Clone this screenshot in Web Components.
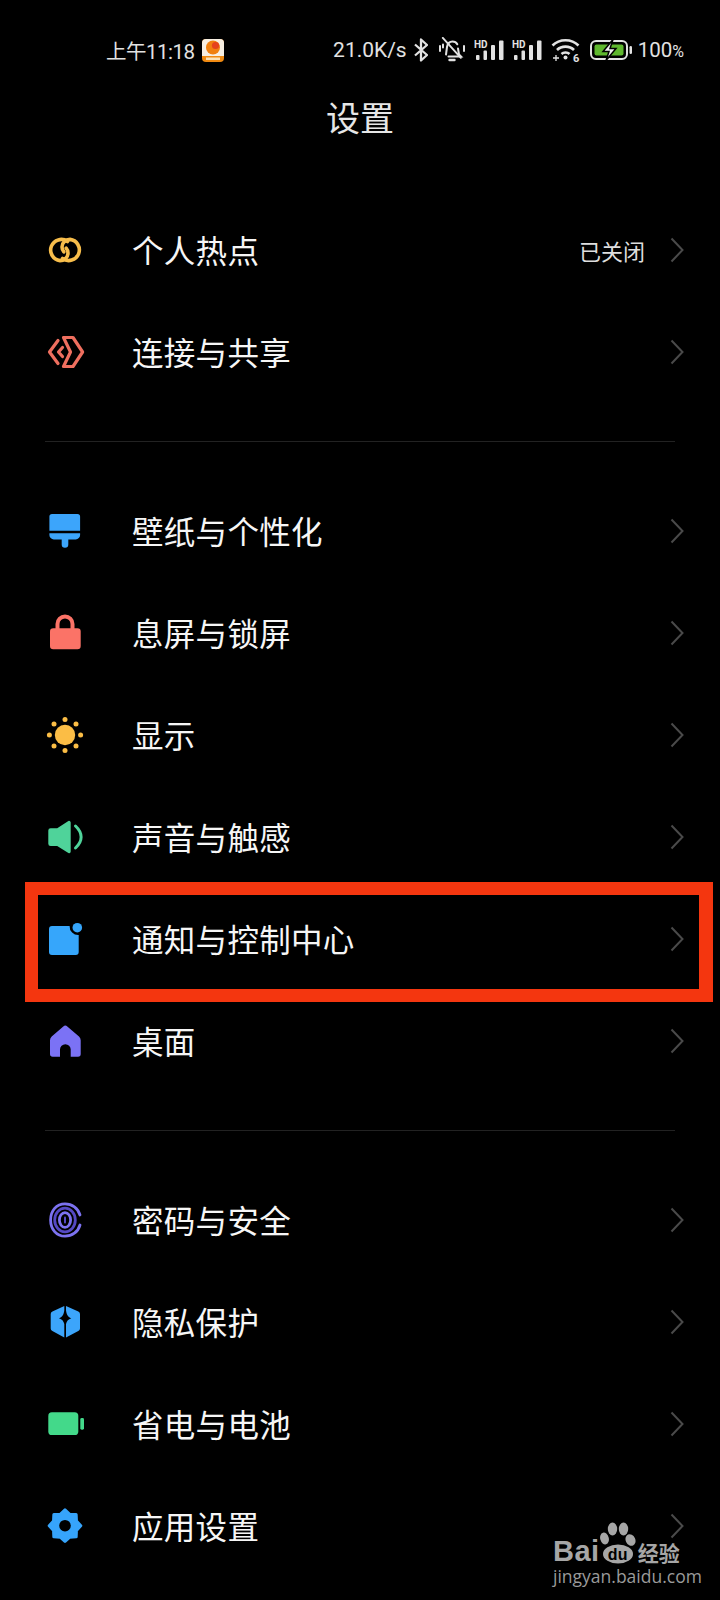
<!DOCTYPE html>
<html lang="zh-CN">
<head>
<meta charset="utf-8">
<title>设置</title>
<style>
  html, body { margin: 0; background: #000; }
  body { width: 720px; height: 1600px; overflow: hidden; position: relative; font-family: "Noto Sans CJK SC", "Noto Sans", sans-serif; }
</style>
</head>
<body>
<settings-page>
  <status-bar></status-bar>
  <title-bar>设置</title-bar>
  <setting-group>
    <setting-row><app-icon slot="icon" name="link"></app-icon>个人热点<span slot="value">已关闭</span></setting-row>
    <setting-row><app-icon slot="icon" name="share"></app-icon>连接与共享</setting-row>
  </setting-group>
  <group-divider></group-divider>
  <setting-group>
    <setting-row><app-icon slot="icon" name="brush"></app-icon>壁纸与个性化</setting-row>
    <setting-row><app-icon slot="icon" name="lock"></app-icon>息屏与锁屏</setting-row>
    <setting-row><app-icon slot="icon" name="sun"></app-icon>显示</setting-row>
    <setting-row><app-icon slot="icon" name="sound"></app-icon>声音与触感</setting-row>
    <highlight-frame><setting-row><app-icon slot="icon" name="notify"></app-icon>通知与控制中心</setting-row></highlight-frame>
    <setting-row><app-icon slot="icon" name="home"></app-icon>桌面</setting-row>
  </setting-group>
  <group-divider></group-divider>
  <setting-group>
    <setting-row><app-icon slot="icon" name="finger"></app-icon>密码与安全</setting-row>
    <setting-row><app-icon slot="icon" name="privacy"></app-icon>隐私保护</setting-row>
    <setting-row><app-icon slot="icon" name="battery"></app-icon>省电与电池</setting-row>
    <setting-row><app-icon slot="icon" name="gear"></app-icon>应用设置</setting-row>
  </setting-group>
</settings-page>
<baidu-mark></baidu-mark>

<script>
// 8 bumps around the middle, rounded off by the stroke join
function gearPoints() {
  const pts = [];
  for (let i = 0; i < 16; i++) {
    const r = i % 2 ? 12.4 : 15.8;
    const a = (i * Math.PI) / 8 - Math.PI / 2;
    pts.push((20 + r * Math.cos(a)).toFixed(2) + ',' + (19.7 + r * Math.sin(a)).toFixed(2));
  }
  return pts.join(' ');
}

const ICONS = {
  link: `<g fill="none" stroke="#f7bd4b" stroke-width="3.6" stroke-linecap="round">
      <path d="M22.5 11.5A10.6 10.6 0 1 0 15 30.6c4.6 0 8-3.4 8-7.6 0-2-.7-3.6-1.8-4.8"/>
      <path d="M17.5 28.5A10.6 10.6 0 1 0 25 9.4c-4.6 0-8 3.4-8 7.6 0 2 .7 3.6 1.8 4.8"/></g>`,
  share: `<g fill="none" stroke="#ef6f5f" stroke-width="3.2" stroke-linejoin="round" stroke-linecap="round">
      <path d="M18.5 5.5h9.5l9.6 14.5-9.6 14.5h-9.5L25.5 20z"/>
      <path d="M13 8.500 4.500 20 13 31.500"/><path d="M17.500 15.500 13.500 20l4 4.500"/></g>`,
  brush: `<g fill="#3ca5fb"><path d="M7 3h25.500a2.600 2.600 0 0 1 2.600 2.600V19.700H4.400V5.600A2.600 2.600 0 0 1 7 3z"/>
      <path d="M4.400 22.300h30.700v1.700a4.400 4.400 0 0 1-4.400 4.400h-7.400v5a3.300 3.300 0 0 1-6.600 0v-5H8.800A4.400 4.400 0 0 1 4.400 24z"/></g>`,
  lock: `<path d="M12.500 17v-6a7.500 7.500 0 0 1 15 0v6" fill="none" stroke="#fb7367" stroke-width="4"/>
      <rect x="5" y="15.300" width="30.700" height="21" rx="3.200" fill="#fb7367"/>`,
  sun: `<g fill="#fbbd45"><circle cx="20" cy="20" r="10.200"/>
      <circle cx="20" cy="4.400" r="2.500"/><circle cx="20" cy="35.600" r="2.500"/><circle cx="4.400" cy="20" r="2.500"/><circle cx="35.600" cy="20" r="2.500"/>
      <circle cx="9" cy="9" r="2.500"/><circle cx="31" cy="9" r="2.500"/><circle cx="9" cy="31" r="2.500"/><circle cx="31" cy="31" r="2.500"/></g>`,
  sound: `<path d="M5.600 11.300h6.600L23 4.200a1.700 1.700 0 0 1 2.700 1.400v28.800a1.700 1.700 0 0 1-2.700 1.400L12.200 29H5.600a2.300 2.300 0 0 1-2.300-2.300V13.600a2.300 2.300 0 0 1 2.300-2.300z" fill="#4fd39a"/>
      <path d="M30.500 9c7.500 7 7.500 15 0 22" fill="none" stroke="#4fd39a" stroke-width="3" stroke-linecap="round"/>`,
  notify: `<path d="M7 7h17.600a8.600 8.600 0 0 0 9.100 9.100V33a3 3 0 0 1-3 3H7a3 3 0 0 1-3-3V10a3 3 0 0 1 3-3z" fill="#36a6fb"/>
      <circle cx="32.300" cy="8.700" r="4.800" fill="#36a6fb"/>`,
  home: `<path fill-rule="evenodd" d="M18.300 5.400a3 3 0 0 1 4 0L34 15.500a5 5 0 0 1 1.700 3.700V33a2.700 2.700 0 0 1-2.700 2.700h-7.300V28.500a5.300 5.300 0 0 0-10.700 0v7.200H7.700A2.700 2.700 0 0 1 5 33V19.200a5 5 0 0 1 1.700-3.700z" fill="#7b72f5"/>`,
  finger: `<g fill="none" stroke-linecap="round">
      <path d="M35 15C33 8 27 3.800 20 3.800 11.500 3.800 5.600 10.700 5.600 20S11.500 36.200 20 36.200c7 0 13-4.200 15-11.200" stroke="#7c72f0" stroke-width="2.800"/>
      <ellipse cx="20" cy="20" rx="10.300" ry="11.800" stroke="#5549c4" stroke-width="2.800"/>
      <ellipse cx="20" cy="20" rx="5.600" ry="7.400" stroke="#7c72f0" stroke-width="2.800"/>
      <path d="M20 17.500v5" stroke="#5549c4" stroke-width="2"/></g>`,
  privacy: `<path d="M19.300 3.900v4.300c-.5 4-1.700 6.500-5.300 8.100 3 1 4.500 2.700 5.300 5.700v13.400l-11.900-6.300a3 3 0 0 1-1.700-2.700V12.100a3 3 0 0 1 1.700-2.700z" fill="#3ca5fb"/>
      <path d="M21 3.900v4.300c.5 4 1.700 6.500 5.300 8.100-3 1-4.500 2.700-5.300 5.700v13.400l12.300-6.300a3 3 0 0 0 1.700-2.700V12.100a3 3 0 0 0-1.700-2.700z" fill="#3ca5fb"/>`,
  battery: `<rect x="3.300" y="8.300" width="30" height="22.700" rx="3.600" fill="#43d98a"/><rect x="35.300" y="14" width="3.700" height="11.700" rx="1.400" fill="#43d98a"/>`,
  gear: `<polygon points="${gearPoints()}" fill="#36a4fb" stroke="#36a4fb" stroke-width="3" stroke-linejoin="round"/>
      <circle cx="20" cy="19.700" r="5.800" fill="#000"/>`
};

class AppIcon extends HTMLElement {
  constructor() {
    super();
    this.attachShadow({ mode: 'open' });
  }
  connectedCallback() {
    this.shadowRoot.innerHTML = `
      <style>
        :host { display: block; width: 40px; height: 40px; }
        svg { display: block; }
      </style>
      <svg width="40" height="40" viewBox="0 0 40 40">${ICONS[this.getAttribute('name')] || ''}</svg>`;
  }
}
customElements.define('app-icon', AppIcon);

class SettingsPage extends HTMLElement {
  constructor() {
    super();
    this.attachShadow({ mode: 'open' });
    this.shadowRoot.innerHTML = `
      <style>
        :host { display: block; background: #000; color: #fff; min-height: 1600px; }
      </style>
      <slot></slot>`;
  }
}
customElements.define('settings-page', SettingsPage);

class StatusBar extends HTMLElement {
  constructor() {
    super();
    this.attachShadow({ mode: 'open' });
    const signal = `
        <svg style="margin-left:8px" width="30" height="24" viewBox="0 0 30 24"><text x="0" y="9.500" font-size="10" font-weight="700">HD</text>
          <g fill="#e2e2e2"><rect x="2" y="17" width="3.500" height="5" rx="1"/><rect x="9.500" y="12.500" width="3.500" height="9.500" rx="1"/><rect x="17" y="7" width="4" height="15" rx="1"/><rect x="25" y="2.500" width="4.500" height="19.500" rx="1"/></g></svg>`;
    this.shadowRoot.innerHTML = `
      <style>
        :host {
          display: flex; align-items: center; height: 44px; padding: 28px 36px 0 106px;
          color: #e2e2e2; font: 400 21px Roboto, "Noto Sans CJK SC", sans-serif;
        }
        .time { font-size: 20.500px; letter-spacing: -.5px; }
        .app { margin-left: 7px; }
        .right { margin-left: auto; display: flex; align-items: center; }
        svg { display: block; flex: none; }
        svg text { font-family: Roboto, sans-serif; fill: #e2e2e2; }
        .pct { font-size: 20.500px; margin-left: 5px; }
        .pct small { font-size: 16px; }
      </style>
      <span class="time">上午11:18</span>
      <svg class="app" width="22" height="23" viewBox="0 0 22 23">
        <rect width="22" height="23" rx="4" fill="#f08a12"/>
        <path d="M0 4a4 4 0 0 1 4-4h14a4 4 0 0 1 4 4v13H0z" fill="#f7efe2"/>
        <circle cx="11" cy="8.500" r="7" fill="#f0800f"/><circle cx="13.500" cy="6.500" r="3.600" fill="#e5421c"/>
        <rect x="4" y="18.500" width="14" height="2.500" fill="#fbe3b8"/>
      </svg>
      <div class="right">
        <span>21.0K/s</span>
        <svg style="margin-left:7px" width="14" height="24" viewBox="0 0 14 24"><path d="M1 6.500 13 17l-6 5.500v-21l6 5.500L1 17.500" fill="none" stroke="#e2e2e2" stroke-width="2.300" stroke-linejoin="round"/></svg>
        <svg style="margin-left:10px" width="28" height="26" viewBox="0 0 28 26" fill="none" stroke="#e2e2e2" stroke-width="2" stroke-linecap="round">
          <path d="M8 17.500 9 10c.6-3.500 3-5.500 5.500-5.500 2 0 3.800 1 4.800 2.800"/><path d="M20 11.500l1 6 2 2H10.500"/><path d="M4 2 23 23" transform="translate(1 -1) scale(.95)" /><path d="M11.500 23h5" stroke-width="2.400"/>
          <path d="M2 9v5M5 7.500v3M26 9v5"/>
        </svg>
        ${signal}
        ${signal}
        <svg style="margin-left:9px" width="29" height="28" viewBox="0 0 29 28">
          <g fill="none" stroke="#e2e2e2" stroke-width="2.600"><path d="M1.500 9.500c7-7 19-7 26 0"/><path d="M6 14c4.500-4.500 12.500-4.500 17 0"/><path d="M10.500 18c2-2 6-2 8 0"/></g>
          <circle cx="14.500" cy="21.500" r="2" fill="#e2e2e2"/><path d="M2 22h6M5 19v6" stroke="#e2e2e2" stroke-width="1.300"/>
          <text x="22" y="25.500" font-size="11" font-weight="700">6</text></svg>
        <svg style="margin-left:10px" width="43" height="24" viewBox="0 0 43 24">
          <rect x="1" y="3" width="36" height="18" rx="5" fill="none" stroke="#e2e2e2" stroke-width="2"/>
          <rect x="4.500" y="6.500" width="29" height="11" rx="2" fill="#5fb82e"/>
          <path d="M23 1.500 13 13.500h6L16 22.500l10-12h-6z" fill="#f2f2f2" stroke="#000" stroke-width="1.500"/>
          <rect x="39.500" y="8" width="2.500" height="8" rx="1.200" fill="#e2e2e2"/></svg>
        <span class="pct">100<small>%</small></span>
      </div>`;
  }
}
customElements.define('status-bar', StatusBar);

class TitleBar extends HTMLElement {
  constructor() {
    super();
    this.attachShadow({ mode: 'open' });
    this.shadowRoot.innerHTML = `
      <style>
        :host {
          display: flex; align-items: center; justify-content: center; height: 88px; margin-bottom: 39px;
          color: #e6e6e6; font: 400 34px "Noto Sans CJK SC", sans-serif;
        }
      </style>
      <slot></slot>`;
  }
}
customElements.define('title-bar', TitleBar);

class SettingGroup extends HTMLElement {
  constructor() {
    super();
    this.attachShadow({ mode: 'open' });
    this.shadowRoot.innerHTML = `
      <style>:host { display: flex; flex-direction: column; }</style>
      <slot></slot>`;
  }
}
customElements.define('setting-group', SettingGroup);

class GroupDivider extends HTMLElement {
  constructor() {
    super();
    this.attachShadow({ mode: 'open' });
    this.shadowRoot.innerHTML = `
      <style>:host { display: block; height: 1px; margin: 38px 45px; background: #222; }</style>`;
  }
}
customElements.define('group-divider', GroupDivider);

class SettingRow extends HTMLElement {
  constructor() {
    super();
    this.attachShadow({ mode: 'open' });
    this.shadowRoot.innerHTML = `
      <style>
        :host {
          display: flex; align-items: center; height: 102px; padding: 0 36px 0 45px; box-sizing: border-box;
          color: #f6f6f6; font: 400 31.500px "Noto Sans CJK SC", sans-serif; letter-spacing: .3px;
        }
        .icon { width: 40px; height: 40px; margin-right: 47px; flex: none; }
        .label { padding-bottom: 3px; }
        .value { margin-left: auto; padding-bottom: 1px; color: #dedede; font-size: 22px; letter-spacing: 0; margin-right: 25px; }
        svg { display: block; flex: none; }
      </style>
      <div class="icon"><slot name="icon"></slot></div>
      <div class="label"><slot></slot></div>
      <div class="value"><slot name="value"></slot></div>
      <svg width="14" height="26" viewBox="0 0 14 26"><path d="M1.500 1.500 12.500 13 1.500 24.500" fill="none" stroke="#4a4a4a" stroke-width="2"/></svg>`;
  }
}
customElements.define('setting-row', SettingRow);

class HighlightFrame extends HTMLElement {
  constructor() {
    super();
    this.attachShadow({ mode: 'open' });
    this.shadowRoot.innerHTML = `
      <style>
        :host { display: block; position: relative; }
        .frame { position: absolute; left: 25px; top: -6px; width: 688px; height: 120px; box-sizing: border-box; border: 13px solid #f4360f; border-right-width: 14px; pointer-events: none; }
      </style>
      <slot></slot>
      <div class="frame"></div>`;
  }
}
customElements.define('highlight-frame', HighlightFrame);

class BaiduMark extends HTMLElement {
  constructor() {
    super();
    this.attachShadow({ mode: 'open' });
    this.shadowRoot.innerHTML = `
      <style>
        :host { display: block; position: absolute; left: 550px; top: 1518px; width: 140px; height: 70px; color: #a6a6a6; }
        .logo { display: flex; align-items: flex-start; height: 46px; }
        .bai { font: 700 29px "Liberation Sans", sans-serif; margin-top: 19px; line-height: 29px; letter-spacing: .5px; margin-left: 3px; }
        .paw { position: relative; width: 36px; height: 46px; flex: none; }
        .paw svg { display: block; }
        .du { position: absolute; left: 3px; top: 28px; width: 30px; text-align: center; color: #000; font: 700 16px/18px "Liberation Sans", sans-serif; }
        .jy { font: 700 21px/24px "Noto Sans CJK SC", sans-serif; margin-top: 22px; margin-left: 2px; white-space: nowrap; }
        .url { font: 400 17.500px/20px "Open Sans", sans-serif; color: #9a9a9a; margin: 2px 0 0 3px; white-space: nowrap; }
      </style>
      <div class="logo">
        <span class="bai">Bai</span>
        <div class="paw">
          <svg width="36" height="46" viewBox="0 0 36 46" fill="#a6a6a6">
            <ellipse cx="12.500" cy="11" rx="4.700" ry="6.500"/><ellipse cx="23.500" cy="11" rx="4.700" ry="6.500"/>
            <ellipse cx="4.500" cy="20.500" rx="4.300" ry="6" transform="rotate(-15 4.500 20.500)"/><ellipse cx="30.500" cy="22" rx="4.800" ry="6" transform="rotate(-25 30.500 22)"/>
            <ellipse cx="18" cy="36" rx="15" ry="9.500"/>
          </svg>
          <span class="du">du</span>
        </div>
        <span class="jy">经验</span>
      </div>
      <div class="url">jingyan.baidu.com</div>`;
  }
}
customElements.define('baidu-mark', BaiduMark);
</script>
</body>
</html>
